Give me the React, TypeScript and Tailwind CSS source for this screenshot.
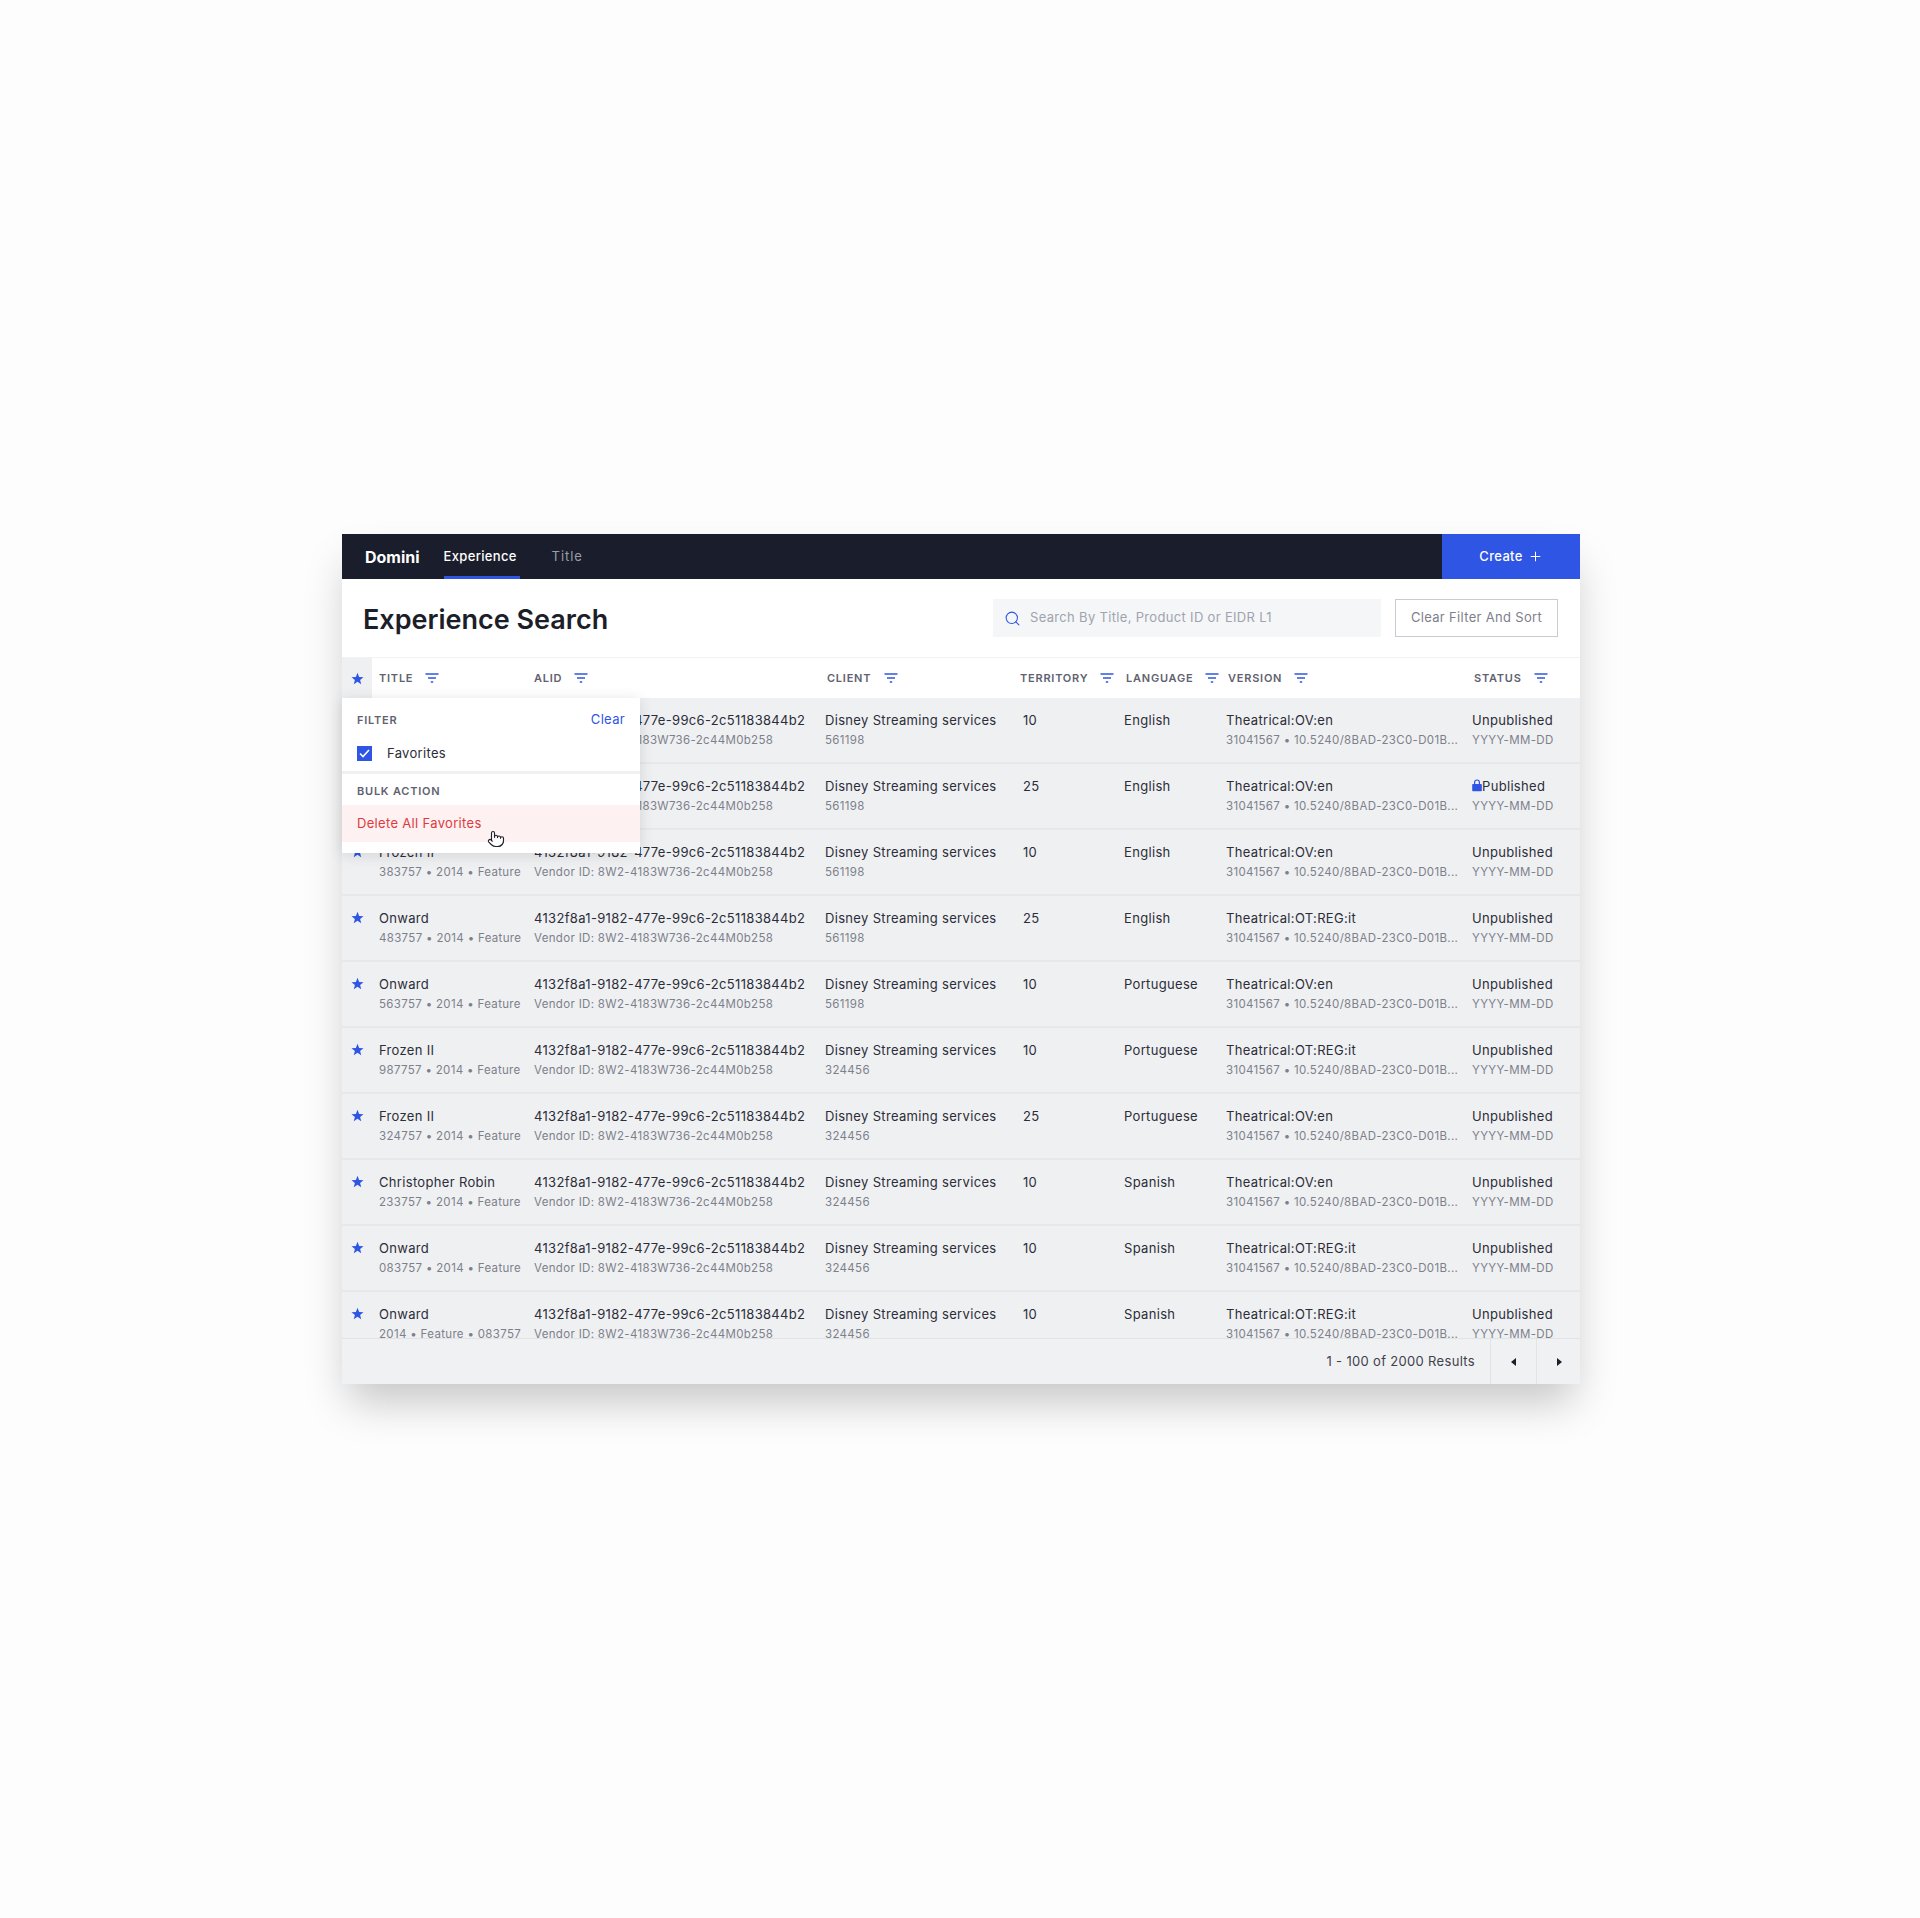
import React from "react";
import { Pointer, Search, Plus } from "lucide-react";

const Star = ({ className = "" }: { className?: string }) => (
  <svg viewBox="0 0 24 24" className={className} fill="#2f55e4">
    <path d="M12 1.5l3 7.6 8.1.5-6.3 5.1 2.1 7.9L12 18.2l-6.9 4.4 2.1-7.9L.9 9.6 9 9.1z" />
  </svg>
);

const FilterIcon = () => (
  <svg width="14" height="10" viewBox="0 0 14 10" className="shrink-0" fill="none" stroke="#2f55e4" strokeWidth="1.4">
    <path d="M0.5 1h13M3 5h8M5.8 9h2.4" />
  </svg>
);

type Row = { t: string; s: string; c: string; cid: string; n: string; l: string; v: string; st: string; lock?: boolean };
const F = "Theatrical:OV:en";
const O = "Theatrical:OT:REG:it";
const rows: Row[] = [
  { t: "Frozen II", s: "183757 • 2014 • Feature", c: "", cid: "561198", n: "10", l: "English", v: F, st: "Unpublished" },
  { t: "Frozen II", s: "283757 • 2014 • Feature", c: "", cid: "561198", n: "25", l: "English", v: F, st: "Published", lock: true },
  { t: "Frozen II", s: "383757 • 2014 • Feature", c: "", cid: "561198", n: "10", l: "English", v: F, st: "Unpublished" },
  { t: "Onward", s: "483757 • 2014 • Feature", c: "", cid: "561198", n: "25", l: "English", v: O, st: "Unpublished" },
  { t: "Onward", s: "563757 • 2014 • Feature", c: "", cid: "561198", n: "10", l: "Portuguese", v: F, st: "Unpublished" },
  { t: "Frozen II", s: "987757 • 2014 • Feature", c: "", cid: "324456", n: "10", l: "Portuguese", v: O, st: "Unpublished" },
  { t: "Frozen II", s: "324757 • 2014 • Feature", c: "", cid: "324456", n: "25", l: "Portuguese", v: F, st: "Unpublished" },
  { t: "Christopher Robin", s: "233757 • 2014 • Feature", c: "", cid: "324456", n: "10", l: "Spanish", v: F, st: "Unpublished" },
  { t: "Onward", s: "083757 • 2014 • Feature", c: "", cid: "324456", n: "10", l: "Spanish", v: O, st: "Unpublished" },
  { t: "Onward", s: "2014 • Feature • 083757", c: "", cid: "324456", n: "10", l: "Spanish", v: O, st: "Unpublished" },
];

const Head = ({ w, label, gap }: { w: string; label: string; gap: string }) => (
  <div className={`${w} flex items-center ${gap} text-[11px] font-semibold tracking-[0.07em] text-[#5f6270]`}>
    <span>{label}</span>
    <FilterIcon />
  </div>
);

export default function App() {
  return (
    <div className="min-h-[1918px] bg-[#fdfdfd] pt-[534px] pl-[342px] font-['Inter',sans-serif] text-[13px] tracking-[0.025em] text-[#2b2d38]">
      <div className="relative flex h-[850px] w-[1238px] flex-col bg-white shadow-[0_24px_40px_-6px_rgba(0,0,0,0.22)]">
        {/* Top bar */}
        <div className="flex h-[45px] shrink-0 bg-[#1a1d2b]">
          <div className="flex items-center pl-[23px] text-[16px] font-bold tracking-normal text-white">Domini</div>
          <div className="ml-[24px] flex h-full flex-col justify-center border-b-[3px] border-[#2f55e4] pt-[3px] w-[76px] text-white font-medium">Experience</div>
          <div className="ml-[32px] flex items-center pt-[1px] tracking-[0.07em] text-[#9b9da6]">Title</div>
          <div className="ml-auto flex h-full w-[138px] items-center justify-center gap-[5px] bg-[#2f55e4] font-medium text-white">
            Create <Plus size={15} strokeWidth={1.6} />
          </div>
        </div>

        {/* Heading row */}
        <div className="flex h-[78px] shrink-0 items-start justify-between pl-[21px] pr-[22px]">
          <h1 className="mt-[23px] text-[27px] leading-[36px] font-semibold tracking-normal text-[#1c1e29]">Experience Search</h1>
          <div className="mt-[20px] flex gap-[14px]">
            <div className="flex h-[38px] w-[388px] items-center gap-[9px] bg-[#f5f6f8] pl-[11px] text-[#a0a3ad]">
              <Search size={17} strokeWidth={1.5} color="#2f55e4" />
              <span>Search By Title, Product ID or EIDR L1</span>
            </div>
            <div className="flex h-[38px] w-[163px] items-center justify-center border border-[#c9cbd0] text-[#7d808b]">Clear Filter And Sort</div>
          </div>
        </div>

        {/* Column header */}
        <div className="flex h-[41px] shrink-0 items-center border-t border-[#f1f2f4]">
          <div className="flex h-full w-[30px] items-center justify-center bg-[#eff0f2]">
            <Star className="h-[13px] w-[13px]" />
          </div>
          <div className="ml-[7px] flex items-center">
            <Head w="w-[155px]" label="TITLE" gap="gap-[12px]" />
            <Head w="w-[293px]" label="ALID" gap="gap-[12px]" />
            <Head w="w-[193px]" label="CLIENT" gap="gap-[13px]" />
            <Head w="w-[106px]" label="TERRITORY" gap="gap-[12px]" />
            <Head w="w-[102px]" label="LANGUAGE" gap="gap-[12px]" />
            <Head w="w-[246px]" label="VERSION" gap="gap-[12px]" />
            <Head w="w-[90px]" label="STATUS" gap="gap-[12px]" />
          </div>
        </div>

        {/* Rows */}
        <div className="h-[640px] overflow-hidden">
          {rows.map((r, i) => (
            <div key={i} className="flex h-[66px] border-b-2 border-[#e7e8eb] bg-[#eff0f2]">
              <div className="flex w-[30px] justify-center pt-[15px]">
                <Star className="h-[13px] w-[13px]" />
              </div>
              <div className="ml-[7px] w-[155px] pt-[13px]">
                <div className="leading-[18px]">{r.t}</div>
                <div className="mt-[2px] text-[11.5px] leading-[18px] text-[#7d808b]">{r.s}</div>
              </div>
              <div className="w-[291px] pt-[13px]">
                <div className="leading-[18px]">4132f8a1-9182-477e-99c6-2c51183844b2</div>
                <div className="mt-[2px] text-[11.5px] leading-[18px] text-[#7d808b]">Vendor ID: 8W2-4183W736-2c44M0b258</div>
              </div>
              <div className="w-[198px] pt-[13px]">
                <div className="leading-[18px]">Disney Streaming services</div>
                <div className="mt-[2px] text-[11.5px] leading-[18px] text-[#7d808b]">{r.cid}</div>
              </div>
              <div className="w-[101px] pt-[13px] leading-[18px]">{r.n}</div>
              <div className="w-[102px] pt-[13px] leading-[18px]">{r.l}</div>
              <div className="w-[246px] pt-[13px]">
                <div className="leading-[18px]">{r.v}</div>
                <div className="mt-[2px] text-[11.5px] leading-[18px] text-[#7d808b]">31041567 • 10.5240/8BAD-23C0-D01B...</div>
              </div>
              <div className="pt-[13px]">
                <div className="flex items-center leading-[18px]">
                  {r.lock && (
                    <svg width="10" height="13" viewBox="0 0 10 13" className="mb-[2px]" fill="#2f55e4">
                      <path d="M1 5h1V3.4a3 3 0 016 0V5h1a.8.8 0 01.8.8v5.6a.8.8 0 01-.8.8H1a.8.8 0 01-.8-.8V5.8A.8.8 0 011 5zm2.2 0h3.6V3.4a1.8 1.8 0 00-3.6 0V5z" />
                    </svg>
                  )}
                  {r.st}
                </div>
                <div className="mt-[2px] text-[11.5px] leading-[18px] text-[#7d808b]">YYYY-MM-DD</div>
              </div>
            </div>
          ))}
        </div>

        {/* Footer */}
        <div className="flex h-[46px] shrink-0 items-stretch justify-end border-t border-[#e2e3e6] bg-[#f0f1f3]">
          <div className="flex items-center pr-[15px] text-[#3f414c]">1 - 100 of 2000 Results</div>
          <div className="flex w-[46px] items-center justify-center border-l border-[#e2e3e6]">
            <svg width="6" height="8" viewBox="0 0 6 8" fill="#1c1e29"><path d="M5 0v8L0 4z" /></svg>
          </div>
          <div className="flex w-[44px] items-center justify-center border-l border-[#e2e3e6]">
            <svg width="6" height="8" viewBox="0 0 6 8" fill="#1c1e29"><path d="M1 0v8l5-4z" /></svg>
          </div>
        </div>

        {/* Popover */}
        <div className="absolute left-0 top-[164px] h-[155px] w-[298px] bg-white shadow-[0_2px_14px_rgba(0,0,0,0.12)]">
          <div className="flex h-[76px] flex-col border-b-[3px] border-[#f0f1f3] px-[15px]">
            <div className="mt-[12px] flex items-center justify-between">
              <span className="text-[11px] font-semibold tracking-[0.07em] text-[#5f6270]">FILTER</span>
              <span className="text-[#2f55e4]">Clear</span>
            </div>
            <div className="mt-[14px] flex items-center gap-[15px]">
              <div className="flex h-[15px] w-[15px] items-center justify-center bg-[#2f55e4]">
                <svg width="11" height="9" viewBox="0 0 11 9" fill="none" stroke="#fff" strokeWidth="1.6"><path d="M1 4.5l3 3 6-6.5" /></svg>
              </div>
              <span>Favorites</span>
            </div>
          </div>
          <div className="px-[15px] pt-[9px] text-[11px] leading-[16px] font-semibold tracking-[0.07em] text-[#5f6270]">BULK ACTION</div>
          <div className="mt-[6px] flex h-[37px] items-center bg-[#fdf2f1] px-[15px] text-[#e0393e]">Delete All Favorites</div>
        </div>
        <div className="absolute left-[145px] top-[296px]">
          <Pointer size={18} fill="#fff" color="#1c1e29" strokeWidth={1.5} />
        </div>
      </div>
    </div>
  );
}
